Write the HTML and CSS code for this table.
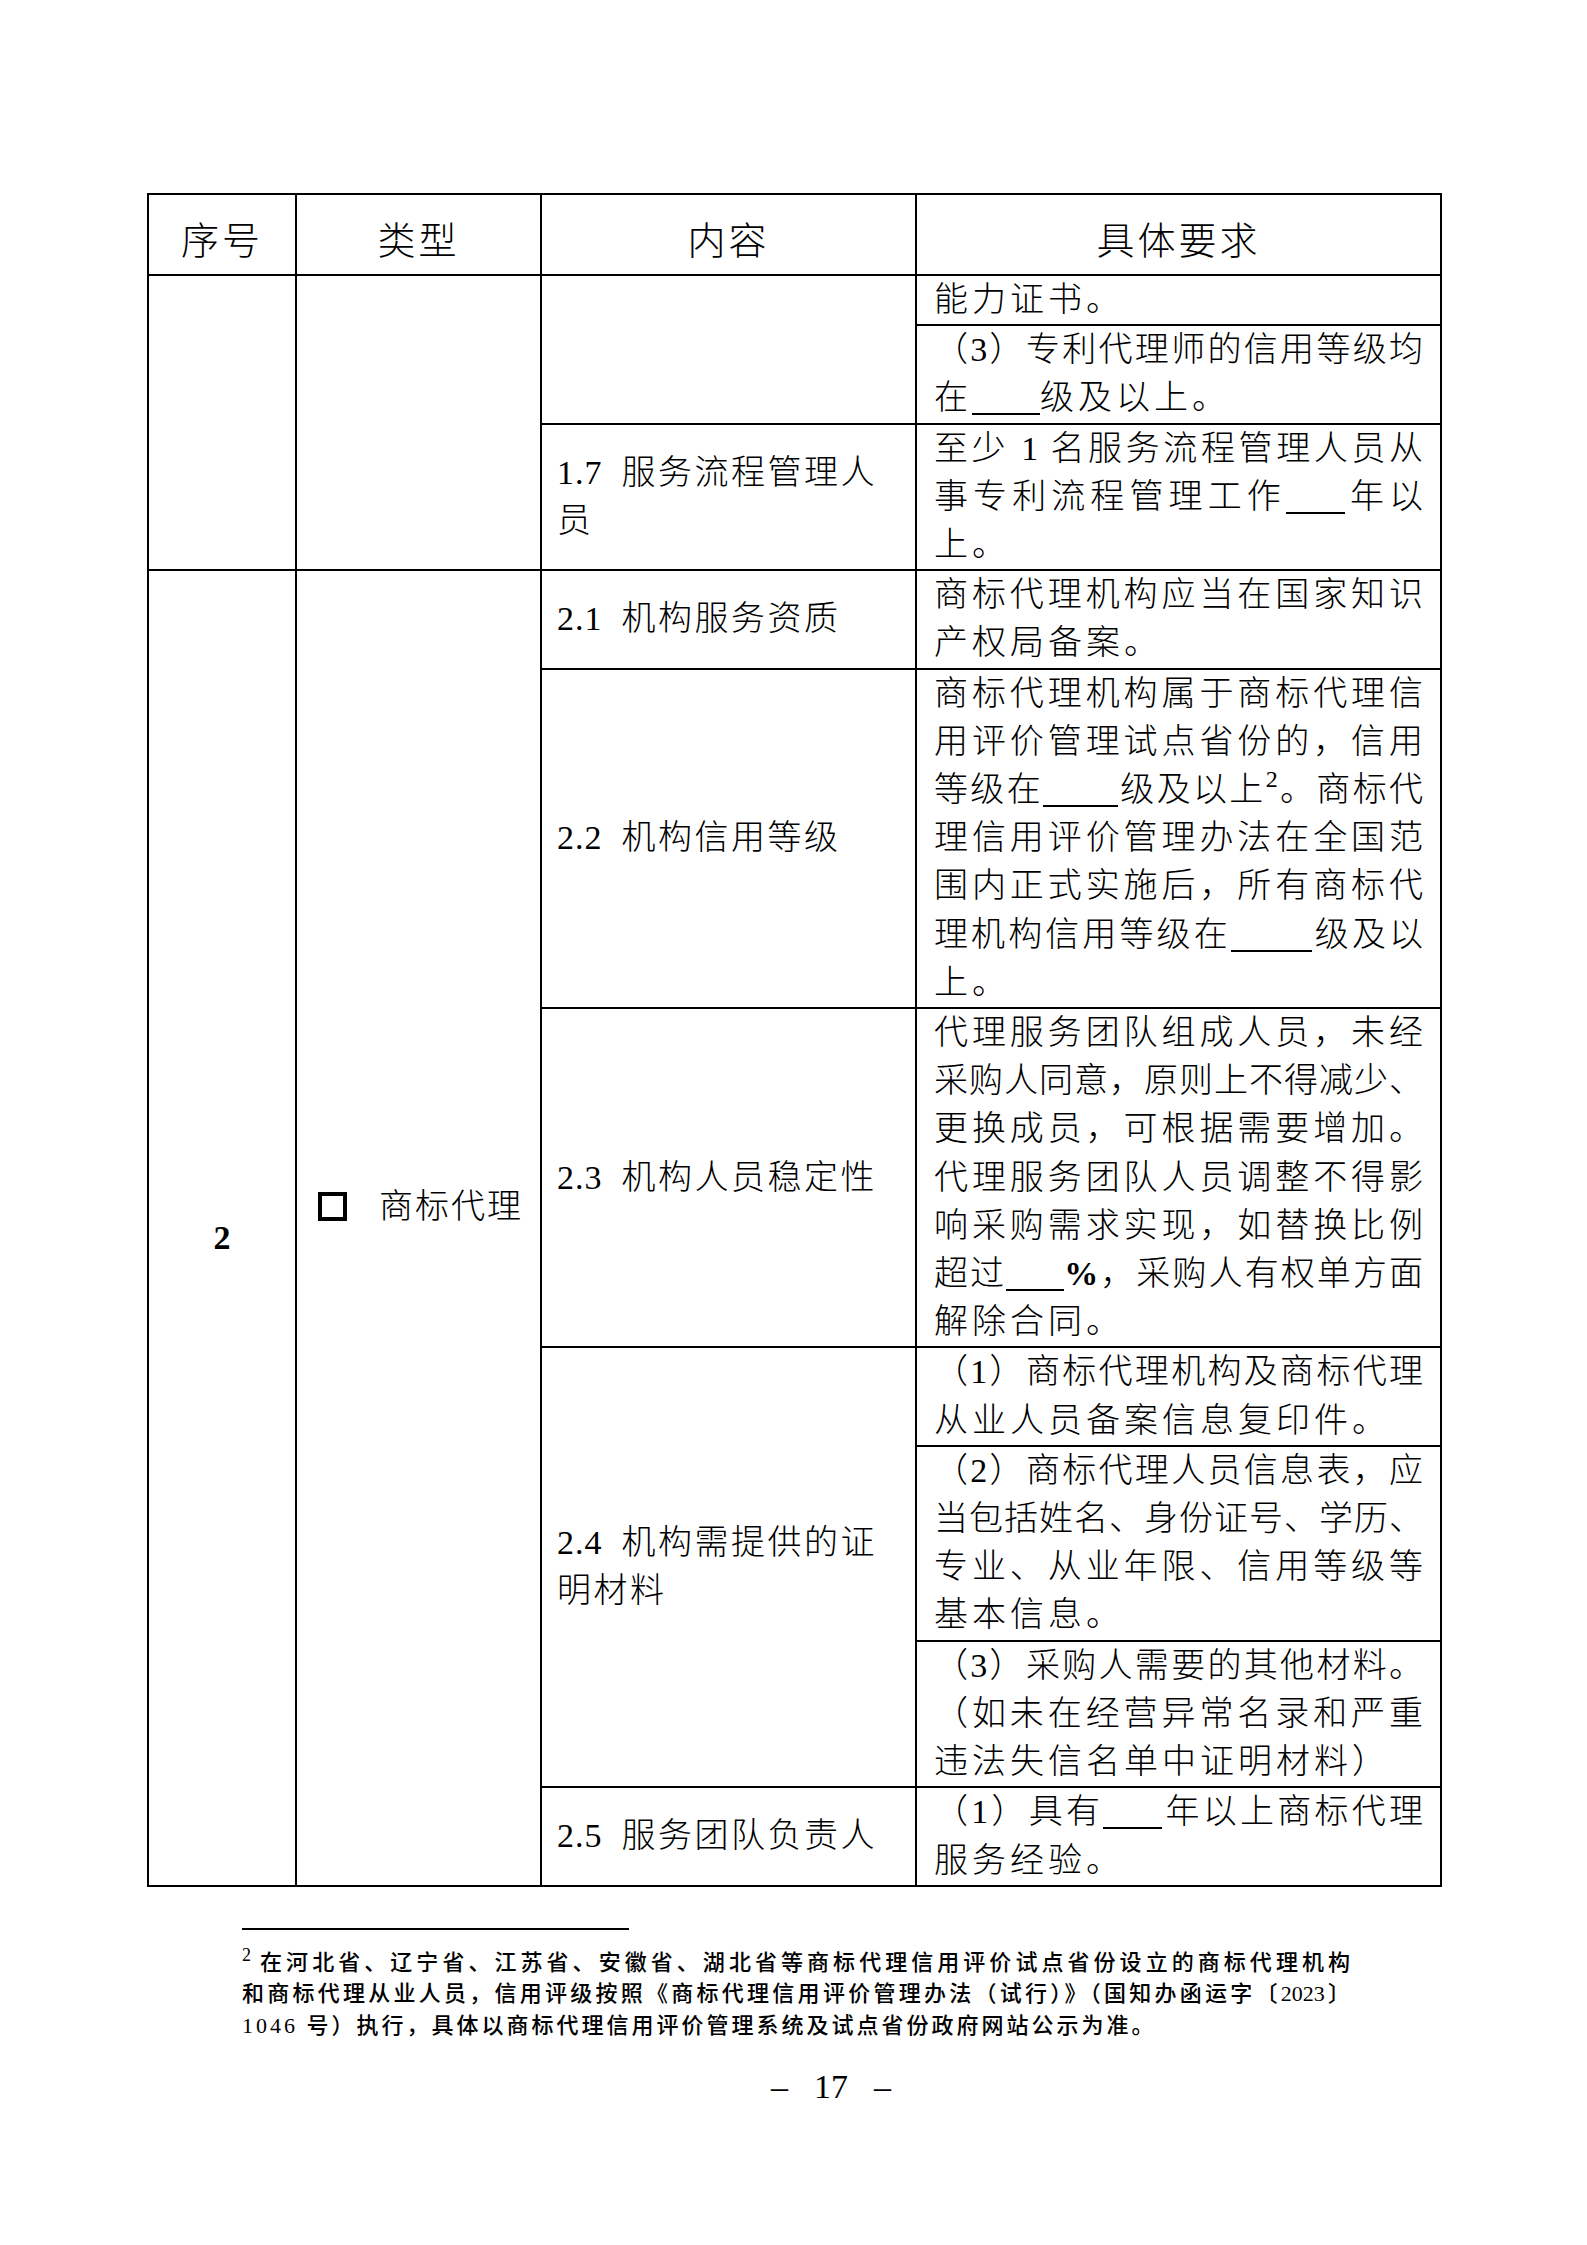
FILE: index.html
```html
<!DOCTYPE html>
<html lang="zh-CN">
<head>
<meta charset="utf-8">
<title>第17页</title>
<link rel="stylesheet" href="styles.css">
</head>
<body>
<div class="sheet">
  <table class="grid">
    <colgroup>
      <col class="c1"><col class="c2"><col class="c3"><col class="c4">
    </colgroup>
    <thead>
      <tr>
        <th>序号</th>
        <th>类型</th>
        <th>内容</th>
        <th>具体要求</th>
      </tr>
    </thead>
    <tbody>
      <tr>
        <td class="seq" rowspan="3"></td>
        <td class="type" rowspan="3"></td>
        <td class="item" rowspan="2"></td>
        <td class="req"><div class="ln end">能力证书。</div></td>
      </tr>
      <tr>
        <td class="req">
          <div class="ln">（3）专利代理师的信用等级均</div>
          <div class="ln end">在<span class="blank b68"></span>级及以上。</div>
        </td>
      </tr>
      <tr>
        <td class="item"><span class="no">1.7</span> 服务流程管理人<br>员</td>
        <td class="req">
          <div class="ln">至少 1 名服务流程管理人员从</div>
          <div class="ln">事专利流程管理工作<span class="blank b59"></span>年以</div>
          <div class="ln end">上。</div>
        </td>
      </tr>
      <tr>
        <td class="seq" rowspan="7"><span class="seq-no">2</span></td>
        <td class="type" rowspan="7"><span class="box"></span><span class="type-text">商标代理</span></td>
        <td class="item"><span class="no">2.1</span> 机构服务资质</td>
        <td class="req">
          <div class="ln">商标代理机构应当在国家知识</div>
          <div class="ln end">产权局备案。</div>
        </td>
      </tr>
      <tr>
        <td class="item"><span class="no">2.2</span> 机构信用等级</td>
        <td class="req">
          <div class="ln">商标代理机构属于商标代理信</div>
          <div class="ln">用评价管理试点省份的，信用</div>
          <div class="ln">等级在<span class="blank b75"></span>级及以上<span class="sup">2</span>。商标代</div>
          <div class="ln">理信用评价管理办法在全国范</div>
          <div class="ln">围内正式实施后，所有商标代</div>
          <div class="ln">理机构信用等级在<span class="blank b81"></span>级及以</div>
          <div class="ln end">上。</div>
        </td>
      </tr>
      <tr>
        <td class="item"><span class="no">2.3</span> 机构人员稳定性</td>
        <td class="req">
          <div class="ln">代理服务团队组成人员，未经</div>
          <div class="ln">采购人同意，原则上不得减少、</div>
          <div class="ln">更换成员，可根据需要增加。</div>
          <div class="ln">代理服务团队人员调整不得影</div>
          <div class="ln">响采购需求实现，如替换比例</div>
          <div class="ln">超过<span class="blank b58"></span><span class="pct">%</span>，采购人有权单方面</div>
          <div class="ln end">解除合同。</div>
        </td>
      </tr>
      <tr>
        <td class="item" rowspan="3"><span class="no">2.4</span> 机构需提供的证<br>明材料</td>
        <td class="req">
          <div class="ln">（1）商标代理机构及商标代理</div>
          <div class="ln end">从业人员备案信息复印件。</div>
        </td>
      </tr>
      <tr>
        <td class="req">
          <div class="ln">（2）商标代理人员信息表，应</div>
          <div class="ln">当包括姓名、身份证号、学历、</div>
          <div class="ln">专业、从业年限、信用等级等</div>
          <div class="ln end">基本信息。</div>
        </td>
      </tr>
      <tr>
        <td class="req">
          <div class="ln">（3）采购人需要的其他材料。</div>
          <div class="ln">（如未在经营异常名录和严重</div>
          <div class="ln end">违法失信名单中证明材料）</div>
        </td>
      </tr>
      <tr>
        <td class="item"><span class="no">2.5</span> 服务团队负责人</td>
        <td class="req">
          <div class="ln">（1）具有<span class="blank b59"></span>年以上商标代理</div>
          <div class="ln end">服务经验。</div>
        </td>
      </tr>
    </tbody>
  </table>

  <div class="notes">
    <div class="rule"></div>
    <div class="fn">
      <div class="ln"><span class="fn-mark">2</span>在河北省、辽宁省、江苏省、安徽省、湖北省等商标代理信用评价试点省份设立的商标代理机构</div>
      <div class="ln">和商标代理从业人员，信用评级按照《商标代理信用评价管理办法（试行）》（国知办函运字〔2023〕</div>
      <div class="ln end">1046 号）执行，具体以商标代理信用评价管理系统及试点省份政府网站公示为准。</div>
    </div>
  </div>

  <div class="folio"><span class="dash">–</span>17<span class="dash">–</span></div>
</div>
</body>
</html>
```

FILE: styles.css
```css
html, body {
  margin: 0;
  padding: 0;
  background: #ffffff;
}

body {
  color: #000000;
  font-family: "Liberation Serif", "Noto Sans CJK SC", serif;
}

.sheet {
  width: 1587px;
  min-height: 2245px;
  padding-top: 193px;
  box-sizing: border-box;
}

.grid {
  border-collapse: collapse;
  table-layout: fixed;
  width: 1293px;
  margin-left: 147px;
}

.c1 { width: 148px; }
.c2 { width: 245px; }
.c3 { width: 375px; }
.c4 { width: 525px; }

.grid th,
.grid td {
  border: 2px solid #000000;
  padding: 0;
}

.grid th {
  height: 81px;
  padding-top: 6px;
  box-sizing: border-box;
  font-family: "Noto Sans CJK SC", sans-serif;
  font-weight: 300;
  font-size: 38px;
  letter-spacing: 3px;
  text-align: center;
  vertical-align: middle;
}

.seq {
  text-align: center;
  vertical-align: middle;
}

.seq-no {
  display: inline-block;
  padding-top: 20px;
  font-family: "Liberation Serif", serif;
  font-weight: 700;
  font-size: 34px;
}

.type {
  vertical-align: middle;
  padding: 0 0 48px 21px !important;
  white-space: nowrap;
}

.box {
  display: inline-block;
  width: 29px;
  height: 29px;
  box-sizing: border-box;
  border: 4px solid #000000;
  margin-right: 32px;
  vertical-align: -3px;
}

.type-text {
  font-family: "Noto Sans CJK SC", sans-serif;
  font-weight: 300;
  font-size: 34px;
  letter-spacing: 2px;
}

.item {
  vertical-align: middle;
  padding: 0 15px !important;
  font-weight: 300;
  font-size: 34px;
  line-height: 48.2px;
  letter-spacing: 2.5px;
}

.no {
  margin-right: 8px;
  letter-spacing: 1px;
}

.req {
  vertical-align: top;
  padding: 0 17px !important;
  font-weight: 300;
  font-size: 34px;
  line-height: 48.2px;
}

.ln {
  text-align: justify;
  text-align-last: justify;
}

.ln.end {
  text-align-last: left;
  letter-spacing: 4px;
}

.blank {
  display: inline-block;
  height: 30px;
  border-bottom: 2px solid #000000;
  vertical-align: -6px;
}

.b58 { width: 58px; }
.b59 { width: 59px; }
.b68 { width: 68px; }
.b75 { width: 75px; }
.b81 { width: 81px; }

.sup {
  font-size: 24px;
  line-height: 0;
  vertical-align: 14px;
}

.pct {
  font-weight: 700;
}

.notes {
  margin: 41px 0 0 242px;
  width: 1108px;
}

.rule {
  width: 387px;
  border-top: 2px solid #000000;
}

.fn {
  margin-top: 17px;
  font-size: 22px;
  line-height: 31.7px;
  font-weight: 500;
}

.fn .ln.end {
  letter-spacing: 3px;
}

.fn-mark {
  font-size: 18px;
  line-height: 0;
  vertical-align: 9px;
  margin-right: 5px;
}

.folio {
  margin: 25px 0 0 242px;
  width: 1178px;
  text-align: center;
  font-family: "Liberation Serif", serif;
  font-size: 34px;
  line-height: 40px;
}

.dash {
  margin: 0 26px;
}
```
